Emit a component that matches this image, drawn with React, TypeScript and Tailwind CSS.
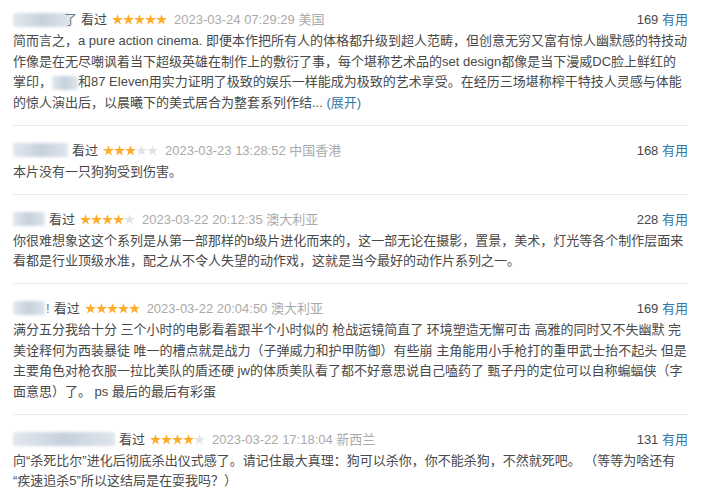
import React from "react"

type Review = {
  nameWidth: number
  tail?: string
  stars: number
  date: string
  place: string
  votes: number
  lines: React.ReactNode[]
}

function Blur({ w }: { w: number }) {
  return (
    <span
      className="inline-block h-[14px] align-middle rounded-[2px] bg-gradient-to-r from-[#e3e8ee] via-[#c6d1dd] to-[#dfe5ec] blur-[1.5px]"
      style={{ width: w }}
    />
  )
}

function Star({ on }: { on: boolean }) {
  return (
    <svg width="11" height="11" viewBox="0 0 24 23" className="block">
      <path
        d="M12 0l2.9 8.3H24l-7.3 5.4 2.8 8.6L12 17l-7.5 5.3 2.8-8.6L0 8.3h9.1z"
        fill={on ? "#ffac2d" : "#e3e3e3"}
      />
    </svg>
  )
}

const reviews: Review[] = [
  {
    nameWidth: 58,
    tail: "了",
    stars: 5,
    date: "2023-03-24 07:29:29",
    place: "美国",
    votes: 169,
    lines: [
      "简而言之，a pure action cinema. 即便本作把所有人的体格都升级到超人范畴，但创意无穷又富有惊人幽默感的特技动",
      "作像是在无尽嘲讽着当下超级英雄在制作上的敷衍了事，每个堪称艺术品的set design都像是当下漫威DC脸上鲜红的",
      <>
        掌印，<Blur w={26} />和87 Eleven用实力证明了极致的娱乐一样能成为极致的艺术享受。在经历三场堪称榨干特技人灵感与体能
      </>,
      <>
        的惊人演出后，以晨曦下的美式居合为整套系列作结... <span className="text-[#3377aa]">(展开)</span>
      </>,
    ],
  },
  {
    nameWidth: 55,
    stars: 3,
    date: "2023-03-23 13:28:52",
    place: "中国香港",
    votes: 168,
    lines: ["本片没有一只狗狗受到伤害。"],
  },
  {
    nameWidth: 32,
    stars: 4,
    date: "2023-03-22 20:12:35",
    place: "澳大利亚",
    votes: 228,
    lines: [
      "你很难想象这这个系列是从第一部那样的b级片进化而来的，这一部无论在摄影，置景，美术，灯光等各个制作层面来",
      "看都是行业顶级水准，配之从不令人失望的动作戏，这就是当今最好的动作片系列之一。",
    ],
  },
  {
    nameWidth: 32,
    tail: "!",
    stars: 5,
    date: "2023-03-22 20:04:50",
    place: "澳大利亚",
    votes: 169,
    lines: [
      "满分五分我给十分 三个小时的电影看着跟半个小时似的 枪战运镜简直了 环境塑造无懈可击 高雅的同时又不失幽默 完",
      "美诠释何为西装暴徒 唯一的槽点就是战力（子弹威力和护甲防御）有些崩 主角能用小手枪打的重甲武士抬不起头 但是",
      "主要角色对枪衣服一拉比美队的盾还硬 jw的体质美队看了都不好意思说自己嗑药了 甄子丹的定位可以自称蝙蝠侠（字",
      "面意思）了。 ps 最后的最后有彩蛋",
    ],
  },
  {
    nameWidth: 102,
    stars: 4,
    date: "2023-03-22 17:18:04",
    place: "新西兰",
    votes: 131,
    lines: [
      "向“杀死比尔”进化后彻底杀出仪式感了。请记住最大真理：狗可以杀你，你不能杀狗，不然就死吧。 （等等为啥还有",
      "“疾速追杀5”所以这结局是在耍我吗？）",
    ],
  },
]

export default function App() {
  return (
    <div
      className="bg-white w-[705px] h-[497px] overflow-hidden pl-[13px] pr-[17px] text-[13px] text-[#494949]"
      style={{ fontFamily: '"Liberation Sans", Arial, "Noto Sans CJK SC", sans-serif' }}
    >
      {reviews.map((r, i) => (
        <div
          key={i}
          className={
            "border-b border-[#eaeaea] pb-[11px] " + (i === 0 ? "pt-[9px]" : "pt-[14px]")
          }
        >
          {/* header */}
          <div className="flex items-center h-[21px] leading-[21px]">
            <div className="flex items-center">
              <Blur w={r.nameWidth} />
              {r.tail && (
                <span
                  className={
                    "relative z-10 text-[#6f7a86] " +
                    (r.tail === "!" ? "ml-[1px]" : "-ml-[7px]")
                  }
                >
                  {r.tail}
                </span>
              )}
            </div>
            <span className="ml-[4px]">看过</span>
            <div className="flex ml-[5px]">
              {[0, 1, 2, 3, 4].map((s) => (
                <Star key={s} on={s < r.stars} />
              ))}
            </div>
            <span className="ml-[7px] text-[#aaaaaa]">
              {r.date} {r.place}
            </span>
            <span className="ml-auto">
              {r.votes} <span className="text-[#3377aa]">有用</span>
            </span>
          </div>
          {/* content */}
          <div className="mt-[1px] leading-[20.7px]">
            {r.lines.map((l, j) => (
              <div key={j} className="whitespace-nowrap">
                {l}
              </div>
            ))}
          </div>
        </div>
      ))}
    </div>
  )
}
